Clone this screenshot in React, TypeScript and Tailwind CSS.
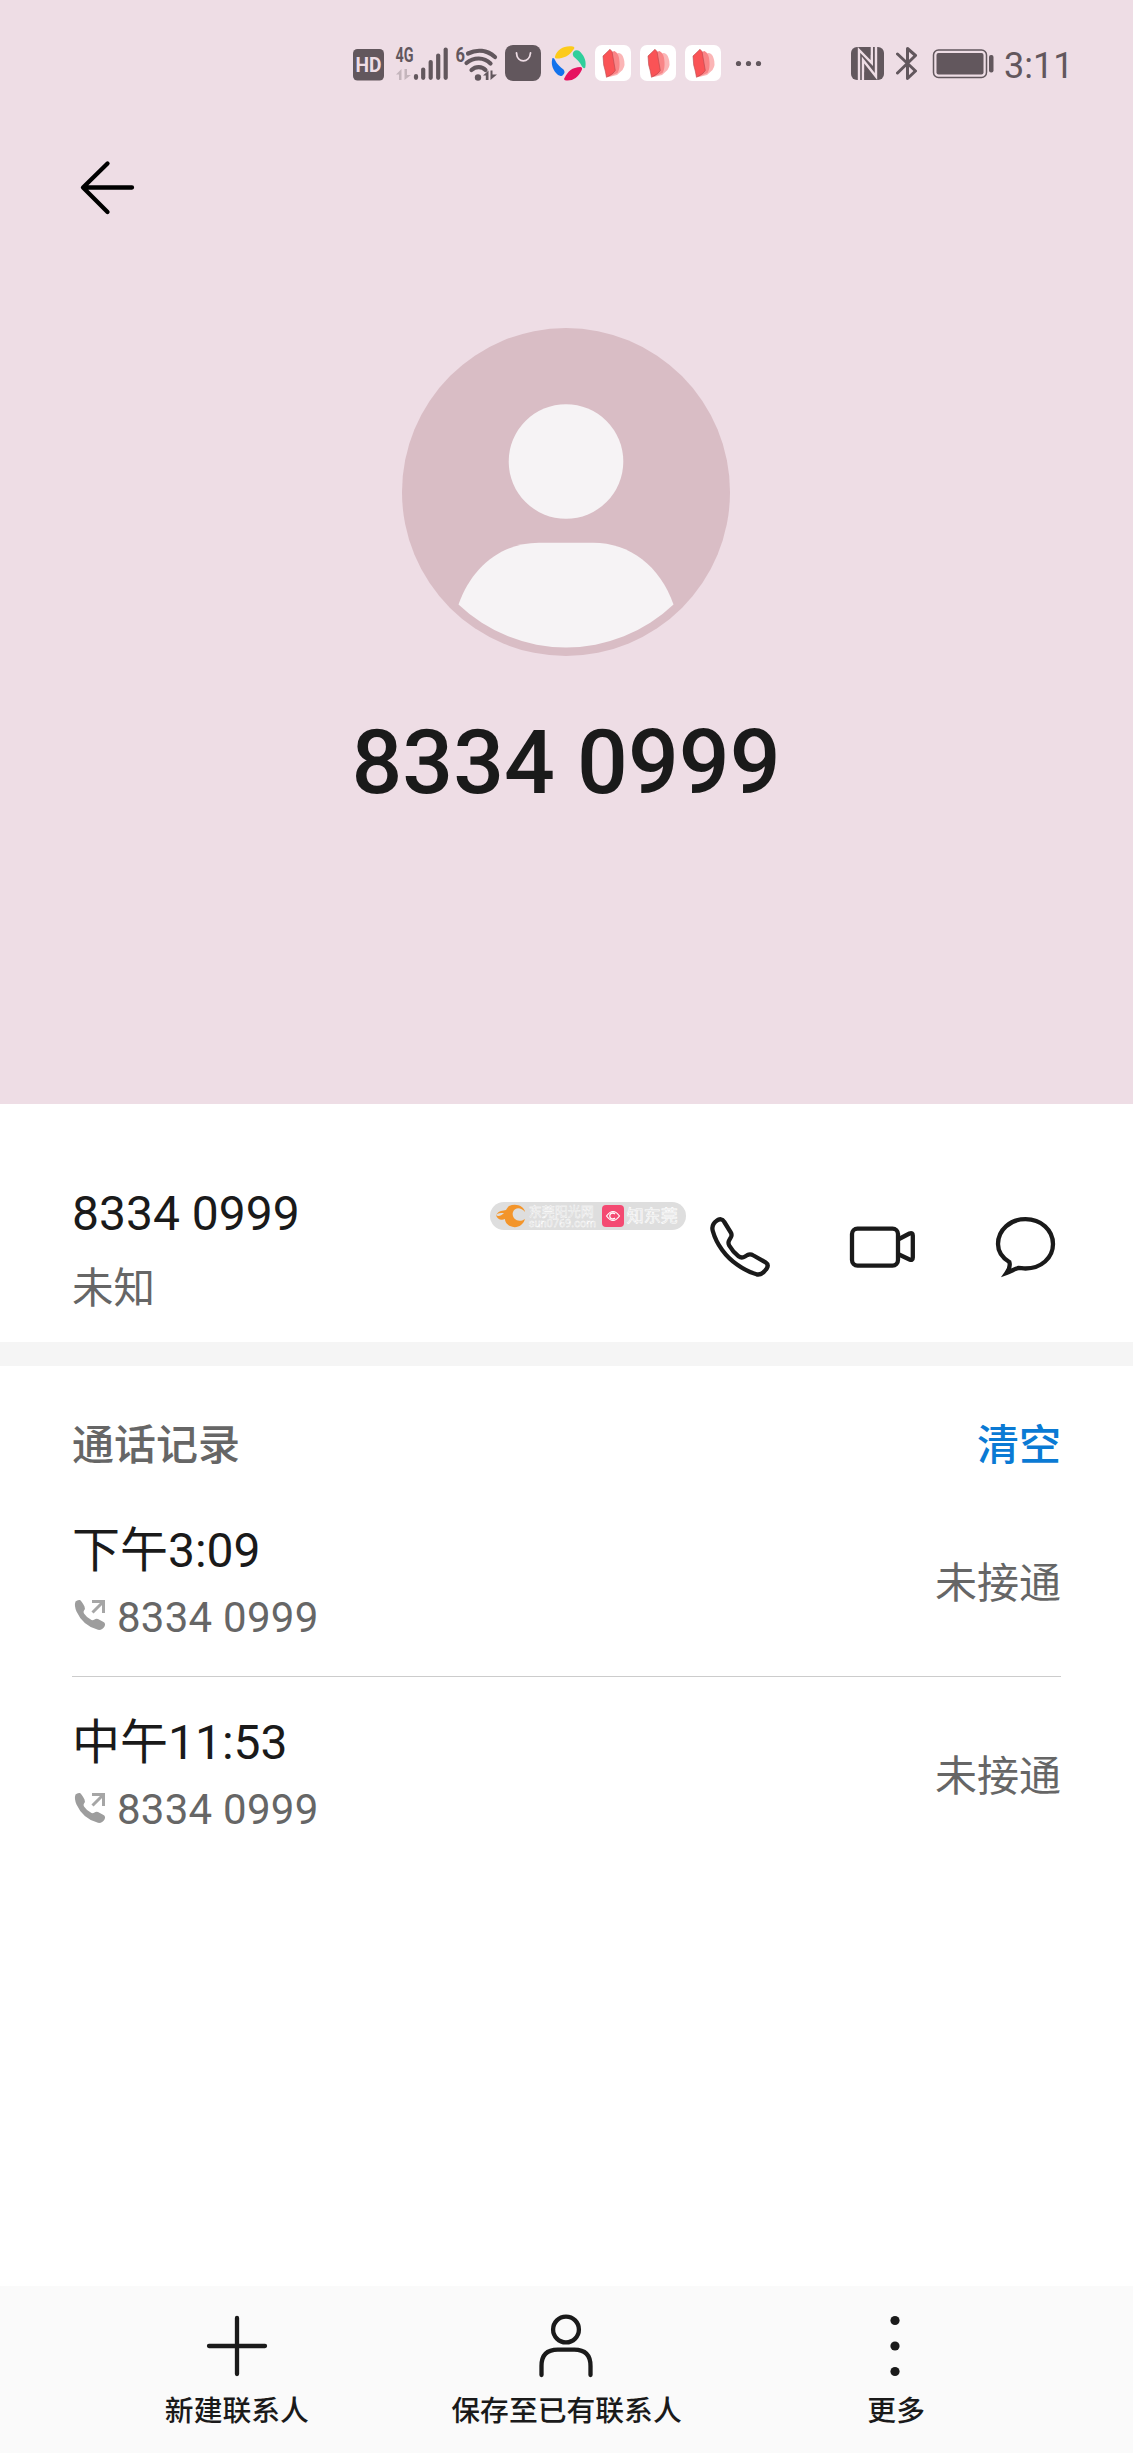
import React from 'react';

const number = '8334 0999';

const callLog = [
  { id: 1, time: '下午3:09', number, status: '未接通' },
  { id: 2, time: '中午11:53', number, status: '未接通' },
];

const HdIcon = () => (
  <svg className="h-9 w-8" viewBox="0 0 32 36">
    <rect x="1" y="4" width="31" height="31.5" rx="4.5" fill="#62575d" />
    <text x="16.5" y="27" textAnchor="middle" fontSize="21" fontWeight="700" textLength="26" lengthAdjust="spacingAndGlyphs" fill="#eedde5">HD</text>
  </svg>
);

const SignalIcon = () => (
  <svg className="ml-[11px] h-9 w-[54px] overflow-visible" viewBox="0 0 54 36" fill="#62575d">
    <text x="0.5" y="17" fontSize="20" fontWeight="700" textLength="18" lengthAdjust="spacingAndGlyphs">4G</text>
    <g fill="#c4b5bc">
      <path d="M1 29.500 L6.500 24 V35 H4 V29.500Z" />
      <path d="M9.500 24 H12 V30 H16 L9.500 35Z" />
    </g>
    <g stroke="#62575d" strokeWidth="4.200" strokeLinecap="round">
      <path d="M21 31 V32.800" />
      <path d="M28.200 24.500 V32.800" />
      <path d="M35.700 17 V32.800" />
      <path d="M43.200 10.500 V32.800" />
      <path d="M50.700 4.500 V32.800" />
    </g>
  </svg>
);

const WifiIcon = () => (
  <svg className="ml-1.5 h-9 w-[43px] overflow-visible" viewBox="0 0 43 36" fill="#62575d">
    <text x="0.5" y="17" fontSize="20" fontWeight="700" textLength="9.5" lengthAdjust="spacingAndGlyphs">6</text>
    <g fill="none" stroke="#62575d" strokeWidth="4.200" strokeLinecap="round">
      <path d="M13 8.500 C22 4 32 5 40 12" />
      <path d="M11.500 18 C19 11.800 29 12 35.500 18.500" />
      <path d="M16.500 25 C21 21 27 21.500 30.500 25" />
    </g>
    <circle cx="23" cy="32.500" r="3.200" />
    <path d="M28 30.500 L33.500 25.500 V35 H30.800 V30.500Z" />
    <path d="M35.500 25.500 H37.500 V29.500 H42 L35.500 35Z" />
  </svg>
);

const BagIcon = () => (
  <svg className="ml-[7px] h-9 w-9" viewBox="0 0 36 36">
    <rect width="36" height="36" rx="8" fill="#62575d" />
    <path d="M11.500 8 C12 18.500 24.500 18.500 25.500 8" fill="none" stroke="#eedde5" strokeWidth="1.800" strokeLinecap="round" />
  </svg>
);

const PinwheelIcon = () => (
  <svg className="ml-2.5 h-9 w-[35px]" viewBox="0 0 35 36">
    <path d="M4 11.500 C6 4 14 0 22 1.500 Q24.500 2.500 22.500 4.500 C18 11 13 13.500 5.500 13.500 Q3.500 13.500 4 11.500Z" fill="#fccb1b" />
    <path d="M24 5.500 Q28 4 31 9 C35 14 35 19 34.300 22.500 Q33 24.500 31 21.500 C29 17 26 14.500 22.500 11.500 Q20.500 7.500 24 5.500Z" fill="#2fcf9b" />
    <path d="M1.500 13 Q3 12.500 4 15 C6 19.500 9 21.500 12.500 24.500 Q15 27.500 11.500 30.500 Q8.500 32.500 5 28 C1 23 0 18 1.500 13Z" fill="#1372ec" />
    <path d="M13.500 33 C17 26 21 22.500 29.500 22 Q32 22.300 30.500 25.500 C27 33 21 36.500 14 35.300 Q12.500 34.500 13.500 33Z" fill="#e6125f" />
  </svg>
);

const PetalIcon = () => (
  <svg className="ml-[9px] h-9 w-9" viewBox="0 0 36 36">
    <rect width="36" height="36" rx="7" fill="#fff" />
    <path d="M17 11 L23 8 Q27 8 28.500 13 Q31 20 27.500 25 L22 30 L14 32Z" fill="#fbb5b6" />
    <path d="M14 8 L19.500 6 Q24 8 24.500 17 Q25 24 22.500 28 L12.500 32.300Z" fill="#f98587" />
    <path d="M8 11 L15 4.300 L17 6.500 L20.300 25.500 Q18.500 29 11.500 32.300 Q10.500 26 8.700 20Z" fill="#fa5356" stroke="#b7474b" strokeWidth=".6" />
  </svg>
);

const NfcIcon = () => (
  <svg className="ml-[89px] h-9 w-[33px]" viewBox="0 0 33 36">
    <rect y="2" width="33" height="33" rx="6" fill="#62575d" />
    <path d="M8 35 V5 L20.800 18 V2 M12 35 V15 L25 31.500 V2" fill="none" stroke="#eedde5" strokeWidth="2.400" />
    <path d="M11.500 2 H19.300 V10Z M13.500 27 L21 35 H13.500Z" fill="#62575d" />
  </svg>
);

const BluetoothIcon = () => (
  <svg className="ml-3 h-9 w-[22px]" viewBox="0 0 22 36">
    <path d="M1.500 9 L19.500 26 L11.500 33.500 V3.500 L19.500 10.500 L1.500 28" fill="none" stroke="#62575d" strokeWidth="3" strokeLinejoin="round" strokeLinecap="round" />
  </svg>
);

const BatteryIcon = () => (
  <svg className="ml-3.5 h-9 w-[62px]" viewBox="0 0 62 36">
    <rect x="1.500" y="5" width="53" height="27.500" rx="5" fill="none" stroke="#62575d" strokeWidth="1.500" />
    <rect x="4.500" y="8" width="47" height="21.500" rx="2" fill="#62575d" />
    <rect x="57" y="10" width="4.500" height="17.500" rx="2" fill="#62575d" />
  </svg>
);

const StatusBar = () => (
  <div className="flex h-[126px] items-center pl-[352px]">
    <HdIcon />
    <SignalIcon />
    <WifiIcon />
    <BagIcon />
    <PinwheelIcon />
    <PetalIcon />
    <PetalIcon />
    <PetalIcon />
    <svg className="ml-3.5 h-9 w-[27px]" viewBox="0 0 27 36" fill="#62575d">
      <circle cx="3.500" cy="18.500" r="2.600" />
      <circle cx="13.500" cy="18.500" r="2.600" />
      <circle cx="23.500" cy="18.500" r="2.600" />
    </svg>
    <NfcIcon />
    <BluetoothIcon />
    <BatteryIcon />
    <span className="ml-[10px] pt-1.5 text-[36px] leading-9 text-[#62575d]">3:11</span>
  </div>
);

const Avatar = () => (
  <svg className="mr-px h-[328px] w-[328px]" viewBox="0 0 328 328">
    <circle cx="164" cy="164" r="164" fill="#d9bdc5" />
    <circle cx="164" cy="133.500" r="57.300" fill="#f6f3f5" />
    <path d="M137 214.700 H191 C228 214.700 258 238 271.500 276.500 A156 156 0 0 1 56.500 276.500 C70 238 100 214.700 137 214.700Z" fill="#f6f3f5" />
  </svg>
);

const Watermark = () => (
  <div className="ml-[190px] mt-[26px] flex h-7 w-[196px] items-center rounded-full bg-[#dedede]">
    <svg className="ml-[5px] h-6 w-[31px] shrink-0" viewBox="0 0 31 24">
      <path d="M14 2 C21 -1 29 2 30 8 C26 3 20 3 18 8 C16 14 23 20 30 15 C28 22 21 25 15 22 C11 20 10 17 10 15 C6 17 2 15 1 11 C3 13 6 12 9 9 C5 9 3 9 1 11 C4 6 8 7 11 6 C12 4 13 3 14 2Z" fill="#f3952b" />
    </svg>
    <div className="ml-[3px] w-[68px] text-[#d6d6d6] [-webkit-text-stroke:0.4px_white]">
      <div className="text-[13px] leading-[14px]">东莞阳光网</div>
      <div className="text-[11px] leading-[9px]">sun0769.com</div>
    </div>
    <svg className="ml-[5px] h-[22px] w-[22px] shrink-0" viewBox="0 0 22 22">
      <rect width="22" height="22" rx="4" fill="#f44a72" />
      <path d="M4.500 11 Q11 2 17.500 11 Q11 20 4.500 11Z" fill="none" stroke="#fff" strokeWidth="1.200" />
      <path d="M13 9 A3 3 0 1 0 13 13" fill="none" stroke="#fff" strokeWidth="1.300" />
    </svg>
    <span className="ml-[3px] whitespace-nowrap text-[17px] leading-5 text-[#dedede] [-webkit-text-stroke:0.6px_white]">知东莞</span>
  </div>
);

const PhoneIcon = () => (
  <svg className="h-[72px] w-[72px]" viewBox="0 0 72 72" fill="none" stroke="#1a1a1a" strokeWidth="4.300" strokeLinejoin="round">
    <path d="M21 10.500 C19.500 8 16.500 7.500 14 9.500 C10.500 12 8.300 15 9.800 20 C13.500 33.500 23 46 34 53.500 C40 57.800 47 61.500 53.500 63.300 C57.500 64.300 61 61.500 63.700 57.500 C65.300 55 64.800 52.800 62.500 51.300 L50.500 44.500 C48.500 43.300 46.500 43 44.500 44 L42 45.500 C40 46.700 37.500 46.700 35.500 45.200 C32 42.500 28.500 38.500 26.200 34.500 C25.200 32.700 25.200 31 26.200 29.200 L28 26 C28.800 24.500 28.600 22.800 27.800 21.500Z" />
  </svg>
);

const VideoIcon = () => (
  <svg className="h-[72px] w-[72px]" viewBox="0 0 72 72" fill="none" stroke="#1a1a1a" strokeWidth="4.300" strokeLinejoin="round">
    <rect x="6" y="17.600" width="46" height="37" rx="5.500" />
    <path d="M53 28 L63.500 22.500 Q66.800 21.300 66.800 24.500 V46.500 Q66.800 50 63.500 48.500 L53 43.500" />
  </svg>
);

const MessageIcon = () => (
  <svg className="h-[72px] w-[72px]" viewBox="0 0 72 72" fill="none" stroke="#1a1a1a" strokeWidth="4.300">
    <path d="M20.300 51 C13 46.500 9 40 9 33 C9 19 21 8.200 36.500 8.200 S64 19 64 33 S52 57.500 36.500 57.500 C34 57.500 31.500 57 29.500 57 C26 57.500 22 60.500 17.500 62 C20 58.500 21.500 54.500 20.300 51Z" />
  </svg>
);

const OutgoingIcon = () => (
  <svg className="h-9 w-9" viewBox="0 0 36 36">
    <path d="M3.500 2.500 Q5.500 .5 8 1 Q10 2.500 12.500 7.500 Q13.500 9.500 12 11.500 Q11 13 12 14.500 Q15 19 19.500 21 Q21 21.500 22.500 20.500 Q24 19.300 26 20 L31.500 23 Q34 24.500 32.500 27.500 Q30 31.500 26 30.800 Q11 27 4.500 12.500 Q2 6.500 3.500 2.500Z" fill="#9d9d9d" />
    <path d="M20.500 13.500 L31 3 M20 2.500 H31.500 V14" fill="none" stroke="#a6a6a6" strokeWidth="3" />
  </svg>
);

const actions = [
  {
    label: '新建联系人',
    icon: <path d="M36 8 V64 M8 36 H64" />,
  },
  {
    label: '保存至已有联系人',
    icon: (
      <>
        <circle cx="36" cy="19.500" r="12.900" />
        <path d="M11.500 65 V56 Q11.500 39.700 27.800 39.700 H44.200 Q60.500 39.700 60.500 56 V65" />
      </>
    ),
  },
  {
    label: '更多',
    icon: (
      <g fill="#1a1a1a" stroke="none">
        <circle cx="35" cy="10.500" r="4.600" />
        <circle cx="35" cy="36" r="4.600" />
        <circle cx="35" cy="61.500" r="4.600" />
      </g>
    ),
  },
];

function App() {
  return (
    <div className="flex h-[2453px] w-[1133px] flex-col overflow-hidden bg-white font-[Roboto,'Noto_Sans_CJK_SC',sans-serif] text-[#1a1a1a]">
      {/* Contact header */}
      <header className="h-[1104px] shrink-0 bg-[#eedde5]">
        <StatusBar />
        <button className="ml-[71px] mt-[25px] block h-[72px] w-[72px]">
          <svg className="h-[72px] w-[72px]" viewBox="0 0 72 72" fill="none" stroke="#000" strokeWidth="4.300" strokeLinecap="round" strokeLinejoin="round">
            <path d="M36.500 12.500 L12 36.500 L36.500 61 M12.500 36.500 H61" />
          </svg>
        </button>
        <div className="mt-[105px] flex flex-col items-center">
          <Avatar />
          <h1 className="mr-px mt-[53px] text-[89.5px] font-medium leading-[108px]">{number}</h1>
        </div>
      </header>

      {/* Number and actions */}
      <section className="flex h-[238px] shrink-0 pl-[72px] pr-[72px] pt-[72px]">
        <div className="pt-2">
          <div className="text-[48px] leading-[60px]">{number}</div>
          <div className="mt-4 text-[41.5px] leading-[58px] text-[#666]">未知</div>
        </div>
        <Watermark />
        <div className="ml-auto flex gap-[71px] pt-[35px]">
          <PhoneIcon />
          <VideoIcon />
          <MessageIcon />
        </div>
      </section>

      <div className="h-6 shrink-0 bg-[#f5f5f5]" />

      {/* Call log */}
      <section className="grow px-[72px] pt-[50px]">
        <div className="flex justify-between text-[42px] font-medium leading-[60px]">
          <h2 className="text-[#666]">通话记录</h2>
          <button className="text-[#0a7ad4]">清空</button>
        </div>
        <div className="mt-[9px]">
          {callLog.map((call) => (
            <div key={call.id} className="flex h-48 items-center justify-between border-b border-[#ccc] pt-[7px] last:border-b-0">
              <div>
                <div className="text-[48px] leading-[66px]">{call.time}</div>
                <div className="flex items-center text-[42px] leading-[66px] tracking-[0.25px] text-[#666]">
                  <OutgoingIcon />
                  <span className="ml-[9px] pt-px">{call.number}</span>
                </div>
              </div>
              <span className="text-[42px] leading-[60px] text-[#666]">{call.status}</span>
            </div>
          ))}
        </div>
      </section>

      {/* Bottom toolbar */}
      <nav className="grid h-[167px] shrink-0 grid-cols-3 bg-[#fafafa] px-[72px]">
        {actions.map((action) => (
          <button key={action.label} className="flex flex-col items-center pt-6">
            <svg className="h-[72px] w-[72px]" viewBox="0 0 72 72" fill="none" stroke="#1a1a1a" strokeWidth="4.300" strokeLinecap="round">
              {action.icon}
            </svg>
            <span className="mt-[11px] text-[28.8px] font-medium leading-9">{action.label}</span>
          </button>
        ))}
      </nav>
    </div>
  );
}

export default App;
